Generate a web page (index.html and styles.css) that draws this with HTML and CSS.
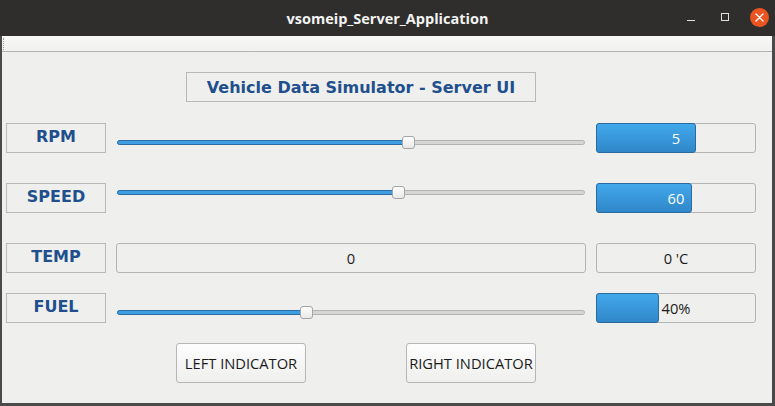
FILE: index.html
```html
<!DOCTYPE html>
<html>
<head>
<meta charset="utf-8">
<link rel="stylesheet" href="styles.css">
</head>
<body>
<div class="window">
  <div class="titlebar">
    <span class="title">vsomeip_Server_Application</span>
    <div class="controls">
      <span class="ctl-min"></span>
      <span class="ctl-max"></span>
      <span class="ctl-close">
        <svg width="9" height="9" viewBox="0 0 9 9"><path d="M1 1L8 8M8 1L1 8" stroke="#fff" stroke-width="1.4" stroke-linecap="round"/></svg>
      </span>
    </div>
  </div>
  <div class="frame">
    <div class="menubar"><span class="grip"></span></div>
    <div class="content">
      <div class="heading">Vehicle Data Simulator - Server UI</div>

      <div class="row row-first">
        <div class="label">RPM</div>
        <div class="slider"><div class="track"><div class="track-fill" style="width:291px"></div><div class="handle" style="left:284px"></div></div></div>
        <div class="progress"><div class="progress-fill" style="width:100px"></div><span class="progress-text on-fill">5</span></div>
      </div>

      <div class="row">
        <div class="label">SPEED</div>
        <div class="slider slider-high"><div class="track"><div class="track-fill" style="width:281px"></div><div class="handle" style="left:274px"></div></div></div>
        <div class="progress"><div class="progress-fill" style="width:96px"></div><span class="progress-text on-fill">60</span></div>
      </div>

      <div class="row">
        <div class="label">TEMP</div>
        <div class="field field-wide">0</div>
        <div class="field field-narrow">0 'C</div>
      </div>

      <div class="row row-tight">
        <div class="label">FUEL</div>
        <div class="slider"><div class="track"><div class="track-fill" style="width:189px"></div><div class="handle" style="left:182px"></div></div></div>
        <div class="progress"><div class="progress-fill" style="width:63px"></div><span class="progress-text">40%</span></div>
      </div>

      <div class="buttons">
        <button class="btn">LEFT INDICATOR</button>
        <button class="btn">RIGHT INDICATOR</button>
      </div>
    </div>
  </div>
</div>
</body>
</html>
```
FILE: styles.css
```css
body {
  margin: 0;
  background: #efefed;
}

.window {
  width: 775px;
  height: 406px;
  display: flex;
  flex-direction: column;
  background: #efefed;
}

.titlebar {
  height: 36px;
  flex: none;
  background: #2f2e2c;
  display: grid;
  grid-template-columns: 1fr auto 1fr;
  align-items: center;
}

.title {
  grid-column: 2;
  font-family: "Open Sans", sans-serif;
  font-weight: bold;
  font-size: 14.5px;
  color: #f3f3f3;
}

.controls {
  grid-column: 3;
  justify-self: end;
  display: flex;
  align-items: center;
  padding-right: 6px;
}

.ctl-min {
  width: 8px;
  height: 1px;
  background: #e0e0e0;
  margin-top: 4px;
  margin-right: 26px;
}

.ctl-max {
  width: 6px;
  height: 6px;
  border: 1px solid #e0e0e0;
  margin-top: -2px;
  margin-right: 21px;
}

.ctl-close {
  width: 19px;
  height: 19px;
  border-radius: 50%;
  background: #e95420;
  display: flex;
  align-items: center;
  justify-content: center;
  margin-top: -2px;
}

.frame {
  flex: 1;
  min-height: 0;
  border-left: 2px solid #4a4a4a;
  border-right: 3px solid #4a4a4a;
  border-bottom: 3px solid #4a4a4a;
  display: flex;
  flex-direction: column;
}

.menubar {
  height: 15px;
  flex: none;
  background: linear-gradient(#f7f7f6, #f1f1f0);
  border-bottom: 1px solid #b3b3b3;
  display: flex;
  align-items: center;
}

.grip {
  width: 0;
  height: 12px;
  margin-left: 1px;
  border-left: 1px dotted #9a9a9a;
}

.content {
  padding-left: 4px;
  display: flex;
  flex-direction: column;
}

.heading {
  margin: 20px 0 0 180px;
  width: 350px;
  height: 30px;
  box-sizing: border-box;
  border: 1px solid #b9b9b9;
  display: flex;
  align-items: center;
  justify-content: center;
  font-family: "DejaVu Sans", sans-serif;
  font-weight: bold;
  font-size: 16px;
  color: #214f8d;
}

.row {
  display: flex;
  gap: 10px;
  height: 30px;
  margin-top: 30px;
}

.row-first {
  margin-top: 21px;
}

.row-tight {
  margin-top: 20px;
}

.label {
  width: 100px;
  box-sizing: border-box;
  border: 1px solid #b9b9b9;
  display: flex;
  align-items: center;
  justify-content: center;
  padding-bottom: 4px;
  font-family: "DejaVu Sans", sans-serif;
  font-weight: bold;
  font-size: 16px;
  color: #214f8d;
}

.slider {
  width: 470px;
  box-sizing: border-box;
  padding: 9px 1px 0;
  display: flex;
  align-items: center;
}

.slider-high {
  padding: 0 1px 11px;
}

.track {
  position: relative;
  flex: 1;
  height: 5px;
  box-sizing: border-box;
  border: 1px solid #b2b2b0;
  border-radius: 3px;
  background: #d6d6d4;
}

.track-fill {
  position: absolute;
  left: -1px;
  top: -1px;
  bottom: -1px;
  box-sizing: border-box;
  border: 1px solid #2a6ca3;
  border-radius: 3px;
  background: #3d9ee2;
}

.handle {
  position: absolute;
  top: 50%;
  width: 13px;
  height: 13px;
  margin-top: -7px;
  box-sizing: border-box;
  border: 1px solid #a5a5a5;
  border-radius: 3px;
  background: linear-gradient(#fefefe, #e9e9e9);
}

.progress {
  position: relative;
  width: 160px;
  box-sizing: border-box;
  border: 1px solid #b4b4b4;
  border-radius: 3px;
  display: flex;
  align-items: center;
  justify-content: center;
  font-family: "Open Sans", sans-serif;
  font-size: 14.7px;
  color: #1b1b1b;
}

.progress-fill {
  position: absolute;
  left: -1px;
  top: -1px;
  bottom: -1px;
  box-sizing: border-box;
  border: 1px solid #2b6a9f;
  border-radius: 3px;
  background: linear-gradient(#42a8ec, #2f87c8);
}

.progress-text {
  position: relative;
}

.on-fill {
  color: #ffffff;
}

.field {
  box-sizing: border-box;
  border: 1px solid #b4b4b4;
  border-radius: 3px;
  display: flex;
  align-items: center;
  justify-content: center;
  font-family: "Open Sans", sans-serif;
  font-size: 14.7px;
  color: #1b1b1b;
}

.field-wide {
  width: 470px;
}

.field-narrow {
  width: 160px;
}

.buttons {
  display: flex;
  gap: 100px;
  margin: 20px 0 0 170px;
}

.btn {
  width: 130px;
  height: 40px;
  box-sizing: border-box;
  padding: 0;
  border: 1px solid #b6b6b6;
  border-radius: 3px;
  background: linear-gradient(#fdfdfd, #efefee);
  font-family: "Open Sans", sans-serif;
  font-size: 14.7px;
  color: #1b1b1b;
}
```
